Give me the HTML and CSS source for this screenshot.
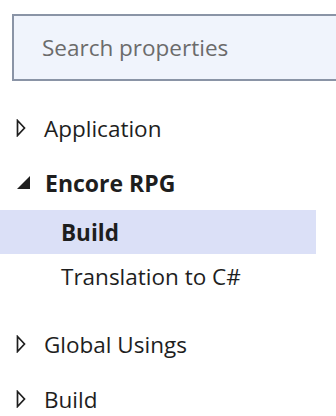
FILE: index.html
```html
<!DOCTYPE html>
<html>
    <head>
        <title>Properties</title>
        <link rel="stylesheet" href="styles.css">
    </head>
    <body>
        <div id="panel">
            <div class="search">
                <input type="text" placeholder="Search properties">
            </div>
            <div class="tree">
                <div class="group">
                    <div class="row header">
                        <svg class="arrow" width="10" height="18" viewBox="0 0 10 18"><path d="M1.5 1.5 L8.5 9 L1.5 16.5 Z" fill="none" stroke="#1e1e1e" stroke-width="1.7"/></svg>
                        <span>Application</span>
                    </div>
                </div>
                <div class="group open">
                    <div class="row header">
                        <svg class="arrow" width="14" height="14" viewBox="0 0 14 14"><path d="M0 13 L13 0 L13 13 Z" fill="#1e1e1e"/></svg>
                        <span>Encore RPG</span>
                    </div>
                    <div class="children">
                        <div class="row child selected"><span>Build</span></div>
                        <div class="row child"><span>Translation to C#</span></div>
                    </div>
                </div>
                <div class="group">
                    <div class="row header">
                        <svg class="arrow" width="10" height="18" viewBox="0 0 10 18"><path d="M1.5 1.5 L8.5 9 L1.5 16.5 Z" fill="none" stroke="#1e1e1e" stroke-width="1.7"/></svg>
                        <span>Global Usings</span>
                    </div>
                </div>
                <div class="group">
                    <div class="row header">
                        <svg class="arrow" width="10" height="18" viewBox="0 0 10 18"><path d="M1.5 1.5 L8.5 9 L1.5 16.5 Z" fill="none" stroke="#1e1e1e" stroke-width="1.7"/></svg>
                        <span>Build</span>
                    </div>
                </div>
            </div>
        </div>
    </body>
</html>
```
FILE: styles.css
```css
body {
    margin: 0;
    font-family: "Open Sans", "Noto Sans", sans-serif;
    background-color: #fff;
    color: #1e1e1e;
    overflow: hidden;
}
#panel {
    width: 336px;
    height: 416px;
    overflow: hidden;
}
.search {
    padding: 14px 0 0 12px;
}
.search input {
    box-sizing: border-box;
    width: 360px;
    height: 67px;
    padding: 0 0 0 28px;
    font-family: inherit;
    font-size: 22.5px;
    color: #1e1e1e;
    background-color: #f0f4fc;
    border: 2px solid #8a94a6;
    border-radius: 0;
    outline: none;
}
.search input::placeholder {
    color: #6b6b6b;
}
.tree {
    width: 316px;
    margin-top: 25px;
}
.group {
    margin-bottom: 11px;
}
.row {
    display: flex;
    align-items: center;
    height: 44px;
    font-size: 22.5px;
}
.header .arrow {
    flex-shrink: 0;
    margin-right: 18px;
    margin-left: 16px;
}
.open .header span {
    font-weight: bold;
    font-size: 23px;
}
.open .header .arrow {
    margin-left: 17px;
    margin-right: 14px;
}
.children {
    padding: 5px 0 13px 0;
}
.child {
    padding-left: 61px;
}
.selected {
    background-color: #dbe0f7;
    font-weight: bold;
}
```
